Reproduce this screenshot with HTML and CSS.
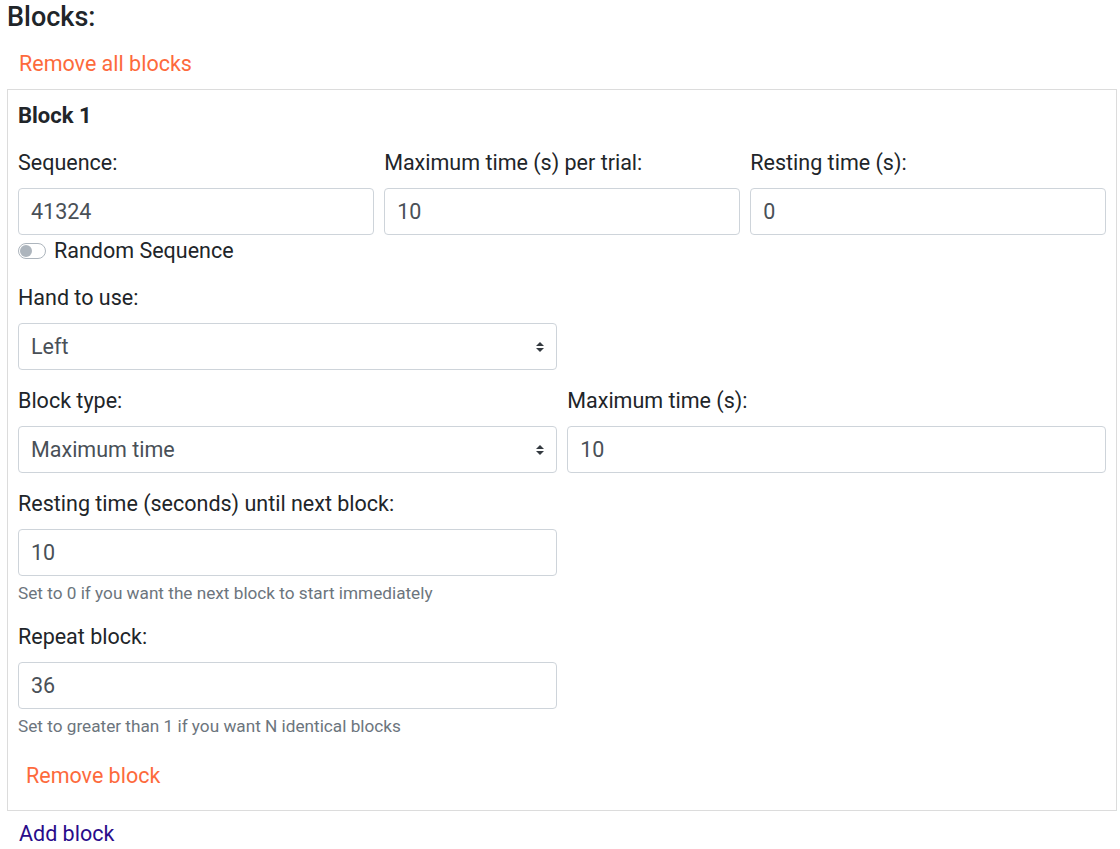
FILE: index.html
```html
<!DOCTYPE html>
<html lang="en">
<head>
<meta charset="utf-8">
<title>Blocks</title>
<link rel="stylesheet" href="styles.css">
</head>
<body>
<div class="page">
  <h4 class="title">Blocks:</h4>
  <div class="link-row"><button class="btn-link danger">Remove all blocks</button></div>
  <div class="card">
    <h5 class="card-title">Block 1</h5>
    <div class="row three">
      <div class="group">
        <label>Sequence:</label>
        <input class="control" type="text" value="41324">
        <div class="switch">
          <span class="track"><span class="knob"></span></span>
          <span class="switch-label">Random Sequence</span>
        </div>
      </div>
      <div class="group">
        <label>Maximum time (s) per trial:</label>
        <input class="control" type="text" value="10">
      </div>
      <div class="group">
        <label>Resting time (s):</label>
        <input class="control" type="text" value="0">
      </div>
    </div>
    <div class="row two">
      <div class="group">
        <label>Hand to use:</label>
        <div class="control select">Left</div>
      </div>
    </div>
    <div class="row two">
      <div class="group">
        <label>Block type:</label>
        <div class="control select">Maximum time</div>
      </div>
      <div class="group">
        <label>Maximum time (s):</label>
        <input class="control" type="text" value="10">
      </div>
    </div>
    <div class="row two">
      <div class="group">
        <label>Resting time (seconds) until next block:</label>
        <input class="control" type="text" value="10">
        <small class="help">Set to 0 if you want the next block to start immediately</small>
      </div>
    </div>
    <div class="row two last">
      <div class="group">
        <label>Repeat block:</label>
        <input class="control" type="text" value="36">
        <small class="help">Set to greater than 1 if you want N identical blocks</small>
      </div>
    </div>
    <div class="link-row inner"><button class="btn-link danger">Remove block</button></div>
  </div>
  <div class="link-row"><button class="btn-link primary">Add block</button></div>
</div>
</body>
</html>
```
FILE: styles.css
```css
* { box-sizing: border-box; }
html, body { margin: 0; padding: 0; background: #fff; }
body {
  font-family: Roboto, "Liberation Sans", Arial, sans-serif;
  font-size: 21.5px;
  line-height: 30px;
  color: #212529;
}
.page { padding: 0 3px 0 7px; }
.title {
  margin: 0 0 7px 0;
  font-size: 27px;
  font-weight: 500;
  line-height: 34px;
}
.link-row { display: flex; }
.btn-link {
  font-family: inherit;
  font-size: 21.5px;
  line-height: 30px;
  padding: 8px 12px 10px 12px;
  border: 0;
  background: none;
  cursor: pointer;
}
.inner .btn-link { padding-bottom: 9px; }
.danger { color: #fd6a3c; }
.primary { color: #2a0c8a; }
.card {
  border: 1px solid #dcdcdc;
  padding: 13px 10px 10px 10px;
}
.card-title {
  margin: 0 0 19px 0;
  font-size: 22px;
  font-weight: 700;
  line-height: 26px;
}
.row { display: grid; column-gap: 10.5px; margin-bottom: 16px; }
.row.last { margin-bottom: 14px; }
.row.three { grid-template-columns: 1fr 1fr 1fr; }
.row.two { grid-template-columns: 1fr 1fr; }
.group { display: flex; flex-direction: column; }
label { display: block; margin-bottom: 10px; line-height: 30px; }
.control {
  display: block;
  width: 100%;
  height: 47px;
  padding: 0 12px;
  font-family: inherit;
  font-size: 21.5px;
  line-height: 45px;
  color: #495057;
  background: #fff;
  border: 1px solid #ced4da;
  border-radius: 4px;
}
.select {
  background-image: url("data:image/svg+xml,%3csvg xmlns='http://www.w3.org/2000/svg' width='4' height='5' viewBox='0 0 4 5'%3e%3cpath fill='%23343a40' d='M2 0L0 2h4zm0 5L0 3h4z'/%3e%3c/svg%3e");
  background-repeat: no-repeat;
  background-position: right 12px center;
  background-size: 8px 10px;
}
.switch { display: flex; align-items: center; height: 32px; }
.track {
  width: 28px; height: 16px;
  border: 1px solid #adb5bd;
  border-radius: 8px;
  background: #fff;
  position: relative;
  margin-right: 8px;
}
.knob {
  position: absolute;
  left: 1px; top: 1px;
  width: 12px; height: 12px;
  border-radius: 50%;
  background: #adb5bd;
}
.help {
  display: block;
  margin-top: 5px;
  font-size: 17.2px;
  line-height: 25px;
  color: #6c757d;
}
.inner { margin-left: -4px; }
```
